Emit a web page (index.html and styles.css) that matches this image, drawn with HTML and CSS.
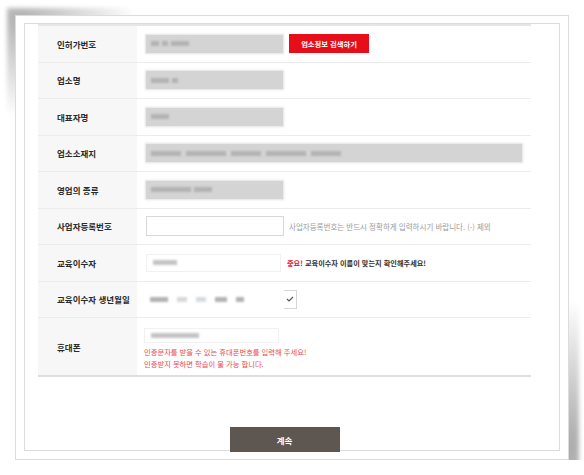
FILE: index.html
```html
<!DOCTYPE html>
<html lang="ko">
<head>
    <meta charset="UTF-8">
    <meta name="viewport" content="width=device-width, initial-scale=1.0">
    <title>교육신청 정보입력</title>
    <link rel="stylesheet" href="styles.css">
</head>
<body>
    <div class="frame">
        <div class="panel">
            <div class="form-table">
                <div class="row">
                    <div class="label">인허가번호</div>
                    <div class="value">
                        <span class="masked"><i class="d8"></i><i class="d6"></i><i class="d18"></i></span>
                        <button class="btn-search" type="button">업소정보 검색하기</button>
                    </div>
                </div>
                <div class="row">
                    <div class="label">업소명</div>
                    <div class="value">
                        <span class="masked"><i class="d18"></i><i class="d6"></i></span>
                    </div>
                </div>
                <div class="row">
                    <div class="label">대표자명</div>
                    <div class="value">
                        <span class="masked"><i class="d18"></i></span>
                    </div>
                </div>
                <div class="row">
                    <div class="label">업소소재지</div>
                    <div class="value">
                        <span class="masked masked-wide"><i class="d30"></i><i class="d40"></i><i class="d30"></i><i class="d40"></i><i class="d30"></i></span>
                    </div>
                </div>
                <div class="row">
                    <div class="label">영업의 종류</div>
                    <div class="value">
                        <span class="masked"><i class="d40"></i><i class="d18"></i></span>
                    </div>
                </div>
                <div class="row">
                    <div class="label">사업자등록번호</div>
                    <div class="value">
                        <input class="text-input" type="text">
                        <span class="hint">사업자등록번호는 반드시 정확하게 입력하시기 바랍니다. (-) 제외</span>
                    </div>
                </div>
                <div class="row">
                    <div class="label">교육이수자</div>
                    <div class="value">
                        <span class="masked masked-light"><i class="d24"></i></span>
                        <span class="notice"><em>중요!</em> 교육이수자 이름이 맞는지 확인해주세요!</span>
                    </div>
                </div>
                <div class="row">
                    <div class="label">교육이수자 생년월일</div>
                    <div class="value">
                        <div class="dob">
                            <span class="dob-mask"><i class="d18"></i><i class="d10 faint"></i><i class="d10 tint"></i><i class="d12"></i><i class="d8"></i></span>
                            <span class="dob-select">
                                <svg width="8" height="6" viewBox="0 0 8 6"><polyline points="1,3 3,5 7,1" fill="none" stroke="#555" stroke-width="1.1"/></svg>
                            </span>
                        </div>
                    </div>
                </div>
                <div class="row row-tall">
                    <div class="label">휴대폰</div>
                    <div class="value value-stack">
                        <span class="masked masked-light masked-short"><i class="d48"></i></span>
                        <p class="warn">인증문자를 받을 수 있는 휴대폰번호를 입력해 주세요!<br>인증받지 못하면 학습이 불 가능 합니다.</p>
                    </div>
                </div>
            </div>
            <div class="actions">
                <button class="btn-next" type="button">계속</button>
            </div>
        </div>
    </div>
</body>
</html>
```

FILE: styles.css
```css
body {
    margin: 0;
    background: #fff;
    font-family: "Noto Sans CJK KR", "Noto Sans", sans-serif;
}

.frame {
    position: relative;
    box-sizing: border-box;
    width: 554px;
    height: 445px;
    margin: 15px 0 0 15px;
    padding: 7px 8px 8px;
    border: 1px solid #dcdcdc;
    background: #fff;
}

.frame::before {
    content: "";
    position: absolute;
    left: -9px;
    top: -8px;
    width: 130px;
    height: 110px;
    background: radial-gradient(ellipse at 12px 10px, rgba(0, 0, 0, 0.3), rgba(0, 0, 0, 0) 70%);
    filter: blur(2px);
    z-index: -1;
}

.frame::after {
    content: "";
    position: absolute;
    right: -11px;
    bottom: -9px;
    width: 180px;
    height: 170px;
    background: radial-gradient(ellipse at 88% 88%, rgba(0, 0, 0, 0.35), rgba(0, 0, 0, 0) 70%);
    filter: blur(2px);
    z-index: -1;
}

.panel {
    box-sizing: border-box;
    height: 428px;
    border: 1px solid #dcdcdc;
    padding: 0 28px 0 13px;
}

.form-table {
    border-top: 2px solid #e6e6e6;
    border-bottom: 2px solid #dedede;
}

.row {
    display: flex;
    box-sizing: border-box;
    height: 36.5px;
    border-bottom: 1px solid #ececec;
}

.row-tall {
    height: 57px;
    border-bottom: none;
}

.label {
    flex: none;
    box-sizing: border-box;
    width: 99px;
    padding-left: 19px;
    display: flex;
    align-items: center;
    background: #f7f7f7;
    color: #2b2b2b;
    font-size: 8.5px;
    font-weight: 700;
}

.value {
    flex: 1;
    display: flex;
    align-items: center;
    padding-left: 9px;
}

.value-stack {
    flex-direction: column;
    align-items: flex-start;
    padding-left: 7px;
    padding-top: 10px;
}

/* blurred (censored) field contents */
.masked {
    display: flex;
    align-items: center;
    gap: 3px;
    box-sizing: border-box;
    width: 137px;
    height: 18px;
    padding-left: 5px;
    background: #d4d4d4;
    box-shadow: 0 0 2px 1px #e2e2e2;
}

.masked-wide {
    width: 376px;
    gap: 5px;
}

.masked-light {
    width: 135px;
    background: #fff;
    border: 1px solid #f1f1f1;
    box-shadow: none;
    padding-left: 6px;
}

.masked-short {
    height: 15px;
}

.masked i,
.dob-mask i {
    display: block;
    height: 5px;
    background: #b3b3b3;
    filter: blur(1px);
}

.masked-light i {
    background: #c4c4c4;
}

.d6 { width: 6px; }
.d8 { width: 8px; }
.d10 { width: 10px; }
.d12 { width: 12px; }
.d18 { width: 18px; }
.d24 { width: 24px; }
.d30 { width: 30px; }
.d40 { width: 40px; }
.d48 { width: 48px; }

.btn-search {
    margin-left: 6px;
    width: 80px;
    height: 19px;
    padding: 0;
    border: none;
    background: #e60f19;
    color: #fff;
    font-family: inherit;
    font-size: 7.3px;
    font-weight: 700;
}

.text-input {
    box-sizing: border-box;
    width: 138px;
    height: 20px;
    margin: 0;
    border: 1px solid #d8d8d8;
    background: #fff;
}

.hint {
    margin-left: 5px;
    color: #9a9a9a;
    font-size: 7.5px;
}

.notice {
    margin-left: 6px;
    color: #333;
    font-size: 7.2px;
    font-weight: 700;
}

.notice em {
    font-style: normal;
    color: #e8131a;
}

.dob {
    display: flex;
    margin-left: -2px;
}

.dob-mask {
    display: flex;
    align-items: center;
    gap: 9px;
    box-sizing: border-box;
    width: 140px;
    height: 19px;
    padding-left: 6px;
    background: #fff;
}

.dob-mask .faint {
    background: #d8d8d8;
}

.dob-mask .tint {
    background: #d6dbe3;
}

.dob-select {
    display: flex;
    align-items: center;
    box-sizing: border-box;
    width: 13px;
    height: 19px;
    padding-left: 2px;
    border: 1px solid #d6d6d6;
    border-left: none;
    background: #fff;
}

.warn {
    margin: 3px 0 0;
    color: #ec4850;
    font-size: 7.3px;
    line-height: 12px;
}

.actions {
    display: flex;
    justify-content: center;
    margin-top: 50px;
}

.btn-next {
    width: 110px;
    height: 25px;
    padding: 0;
    border: none;
    background: #5d5651;
    color: #fff;
    font-family: inherit;
    font-size: 8.5px;
    font-weight: 700;
}
```
